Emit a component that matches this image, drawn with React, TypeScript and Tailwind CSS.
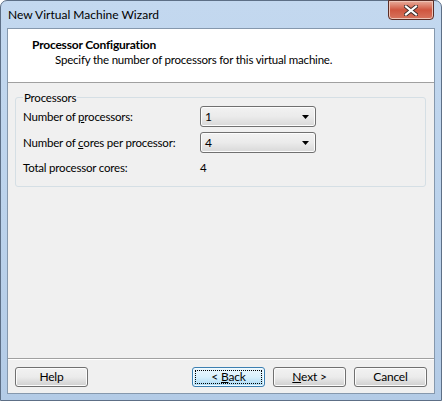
import React from "react";

const font = { fontFamily: 'Lato, "Noto Sans", sans-serif' };

function Combo({ value }: { value: string }) {
  return (
    <div className="w-[116px] h-[21px] rounded-[3px] border border-[#707070] bg-gradient-to-b from-[#f2f2f2] via-[#ebebeb] to-[#d8d8d8] flex items-center pl-[4px] pr-[6px] shadow-[inset_0_0_0_1px_#fcfcfc]">
      <span className="flex-1 text-[12px] leading-[15px] text-black">{value}</span>
      <svg width="7" height="4" viewBox="0 0 7 4" className="shrink-0">
        <path d="M0 0 H7 L3.5 4 Z" fill="#000" />
      </svg>
    </div>
  );
}

function Btn({ children, focused }: { children: React.ReactNode; focused?: boolean }) {
  if (focused) {
    return (
      <button className="w-[73px] h-[20px] rounded-[3px] border border-[#3c7fb1] bg-gradient-to-b from-[#eaf6fd] via-[#d9f0fc] to-[#a7d9f5] flex items-center justify-center p-[2px] shadow-[inset_0_0_0_1px_#f0faff]">
        <span className="w-full h-full border border-dotted border-[#000] flex items-center justify-center text-[12px] leading-[14px] text-black">
          <span className="whitespace-pre">{children}</span>
        </span>
      </button>
    );
  }
  return (
    <button className="w-[73px] h-[20px] rounded-[3px] border border-[#707070] bg-gradient-to-b from-[#f2f2f2] via-[#ebebeb] to-[#cfcfcf] flex items-center justify-center text-[12px] leading-[14px] text-black shadow-[inset_0_0_0_1px_#fcfcfc]">
      <span className="whitespace-pre">{children}</span>
    </button>
  );
}

export default function App() {
  return (
    <div
      style={font}
      className="relative w-[442px] h-[401px] rounded-t-[7px] border border-[#5d6f86] bg-gradient-to-b from-[#c3d8ef] via-[#bcd3ec] to-[#b3cbe6] flex flex-col text-[11.5px] tracking-[-0.2px]"
    >
      {/* Title bar */}
      <div className="h-[27px] flex items-center pl-[7px] text-[12px] tracking-normal text-black">
        New Virtual Machine Wizard
      </div>
      <div className="absolute top-[-1px] right-[7px] w-[46px] h-[20px] rounded-b-[4px] border border-[#5b2d25] bg-gradient-to-b from-[#e7ac9c] via-[#cf553f] to-[#d7745e] flex items-center justify-center shadow-[inset_0_0_0_1px_#eec3b6]">
        <svg width="14" height="11" viewBox="0 0 14 11">
          <path d="M2 1.5 L12 9.5 M12 1.5 L2 9.5" stroke="#3a2a28" strokeWidth="4" strokeLinecap="square" />
          <path d="M2 1.5 L12 9.5 M12 1.5 L2 9.5" stroke="#ffffff" strokeWidth="2.2" strokeLinecap="square" />
        </svg>
      </div>

      {/* Client area */}
      <div className="mx-[6px] h-[366px] border border-[#8598ad] bg-[#f0f0f0] flex flex-col">
        {/* Header */}
        <div className="h-[54px] bg-white border-b border-[#a0a0a0] pt-[8px] leading-[15px] text-black">
          <div className="pl-[24px] font-bold text-[12px]">Processor Configuration</div>
          <div className="pl-[47px]">Specify the number of processors for this virtual machine.</div>
        </div>

        {/* Body */}
        <div className="flex-1 flex flex-col">
          <fieldset className="mt-[7px] ml-[7px] mr-[8px] rounded-[3px] border border-[#d5dfe5] pl-[7px] pb-[8px] pt-[1px]">
            <legend className="leading-[15px] text-black px-[1px]">Processors</legend>
            <div className="flex flex-col">
              <div className="flex items-center h-[21px]">
                <span className="w-[177px] whitespace-nowrap text-black">
                  Number of <span className="underline">p</span>rocessors:
                </span>
                <Combo value="1" />
              </div>
              <div className="flex items-center h-[21px] mt-[5px]">
                <span className="w-[177px] whitespace-nowrap text-black">
                  Number of <span className="underline">c</span>ores per processor:
                </span>
                <Combo value="4" />
              </div>
              <div className="flex items-center h-[20px] mt-[5px]">
                <span className="w-[177px] whitespace-nowrap text-black">Total processor cores:</span>
                <span className="text-black">4</span>
              </div>
            </div>
          </fieldset>
          <div className="flex-1" />
          <div className="border-t border-[#a0a0a0] shadow-[0_1px_0_#ffffff]" />
          <div className="h-[34px] flex items-start pt-[8px] pl-[7px]">
            <Btn>Help</Btn>
            <div className="flex-1" />
            <div className="flex gap-[8px] pr-[7px]">
              <Btn focused>
                {"< "}<span className="underline">B</span>ack
              </Btn>
              <Btn>
                <span className="underline">N</span>{"ext >"}
              </Btn>
              <Btn>Cancel</Btn>
            </div>
          </div>
        </div>
      </div>
    </div>
  );
}
